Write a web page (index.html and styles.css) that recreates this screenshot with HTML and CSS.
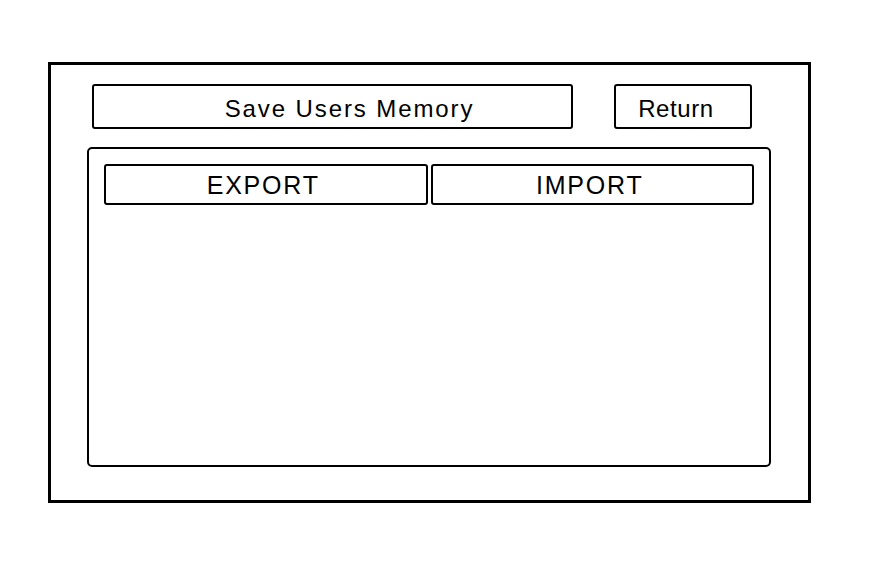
FILE: index.html
```html
<!DOCTYPE html>
<html>
<head>
<meta charset="utf-8">
<link rel="stylesheet" href="styles.css">
</head>
<body>
<div class="frame">
  <div class="toprow">
    <div class="btn save">Save Users Memory</div>
    <div class="btn ret">Return</div>
  </div>
  <div class="panel">
    <div class="tabs">
      <div class="tab">EXPORT</div>
      <div class="tab">IMPORT</div>
    </div>
  </div>
</div>
</body>
</html>
```

FILE: styles.css
```css
html, body {
  margin: 0;
  padding: 0;
  background: #fff;
}
body {
  font-family: "Liberation Sans", Arial, sans-serif;
  color: #000;
}
.frame {
  box-sizing: border-box;
  margin: 62px 0 0 48px;
  width: 763px;
  height: 441px;
  border: 3px solid #000;
  padding: 19px 37px 0 36px;
  display: flex;
  flex-direction: column;
}
.toprow {
  display: flex;
  gap: 41px;
  margin-left: 5px;
  height: 45px;
}
.btn {
  box-sizing: border-box;
  border: 2px solid #000;
  border-radius: 3px;
  display: flex;
  align-items: center;
  justify-content: center;
  padding-top: 4px;
}
.save {
  width: 481px;
  font-size: 24px;
  letter-spacing: 1.9px;
  padding-left: 34px;
}
.ret {
  width: 138px;
  font-size: 24px;
  letter-spacing: 0.6px;
  padding-right: 14px;
}
.panel {
  box-sizing: border-box;
  margin-top: 18px;
  height: 320px;
  border: 2px solid #000;
  border-radius: 5px;
  padding: 15px;
}
.tabs {
  display: flex;
  gap: 3px;
  height: 41px;
}
.tab {
  flex: 1;
  box-sizing: border-box;
  border: 2px solid #000;
  border-radius: 3px;
  display: flex;
  align-items: center;
  justify-content: center;
  font-size: 25px;
  letter-spacing: 1.8px;
  padding-top: 1px;
  padding-right: 5px;
}
```
